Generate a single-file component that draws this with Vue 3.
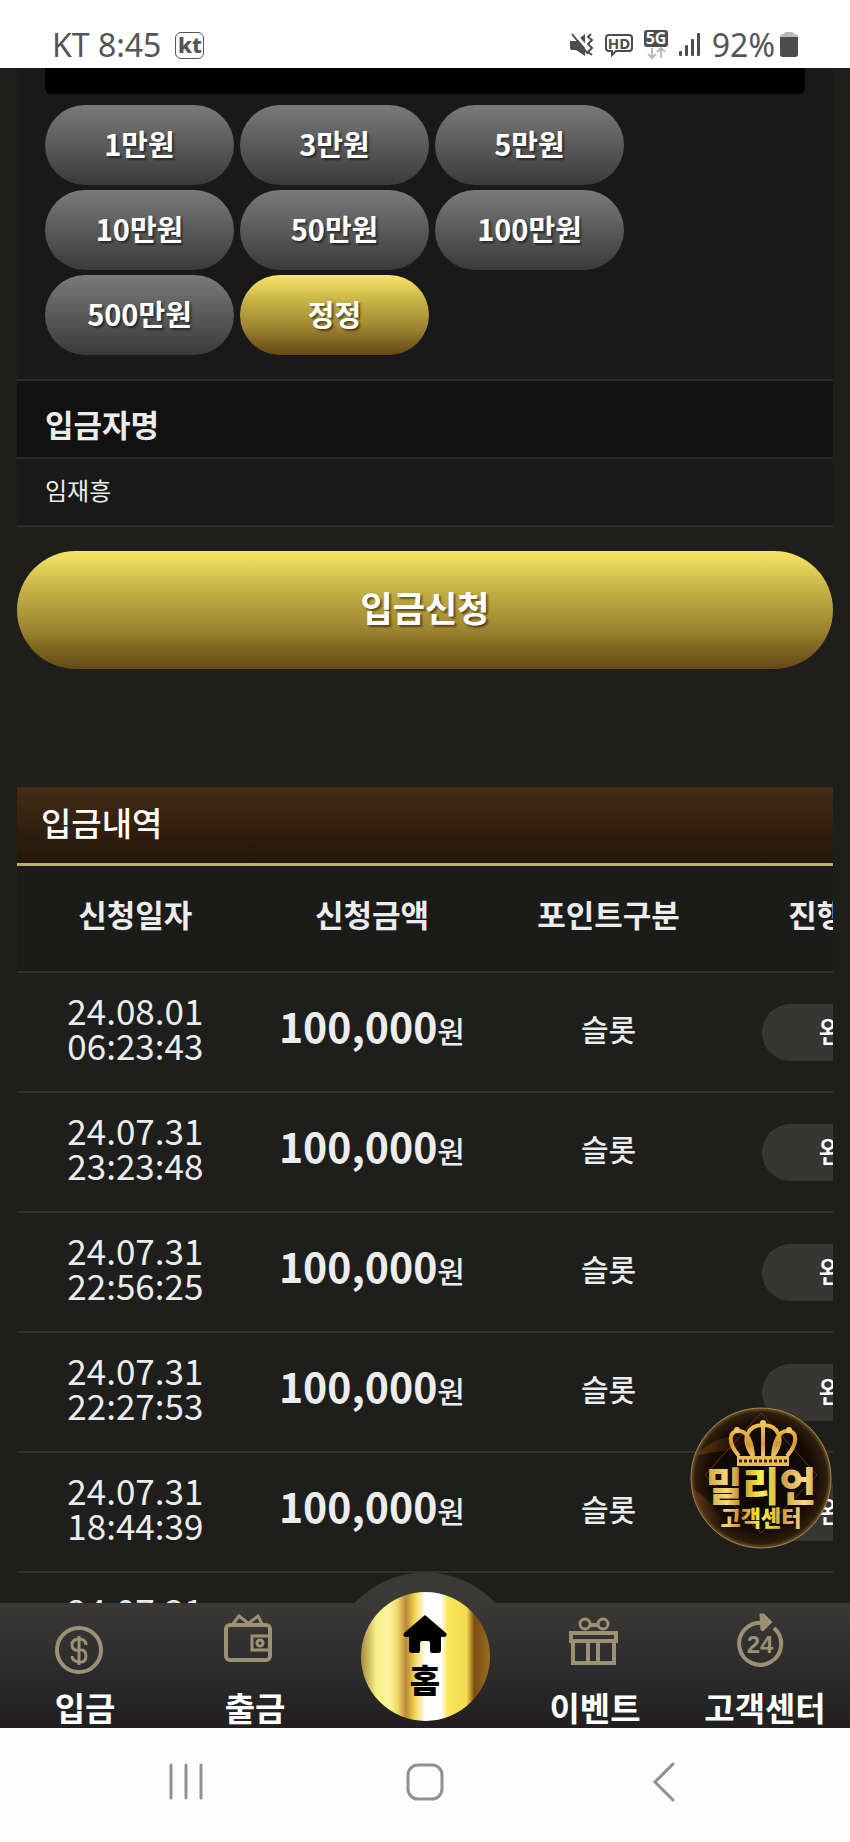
<script setup>
import { ref } from 'vue'

const amounts = ['1만원', '3만원', '5만원', '10만원', '50만원', '100만원', '500만원']
const columns = ['신청일자', '신청금액', '포인트구분', '진행상태']

const depositor = ref('임재흥')

const history = ref([
  { date: '24.08.01', time: '06:23:43', amount: '100,000', type: '슬롯', state: '완료' },
  { date: '24.07.31', time: '23:23:48', amount: '100,000', type: '슬롯', state: '완료' },
  { date: '24.07.31', time: '22:56:25', amount: '100,000', type: '슬롯', state: '완료' },
  { date: '24.07.31', time: '22:27:53', amount: '100,000', type: '슬롯', state: '완료' },
  { date: '24.07.31', time: '18:44:39', amount: '100,000', type: '슬롯', state: '완료' },
  { date: '24.07.31', time: '18:21:07', amount: '100,000', type: '슬롯', state: '완료' }
])
</script>

<template>
  <div class="screen">
    <header class="status">
      <div class="status-left">
        <span>KT 8:45</span>
        <span class="carrier">kt</span>
      </div>
      <div class="status-right">
        <svg width="24" height="24" viewBox="0 0 24 24">
          <path d="M0 8h6l9-7v22l-9-6H2q-2 0-2-2z" fill="#4c4c4c" />
          <path d="M4 0l14 16" stroke="#fff" stroke-width="3" />
          <path d="M2 1l16 20" stroke="#4c4c4c" stroke-width="2" />
          <path d="M21 1l-3 3 4 3-4 4 4 4-4 4 4 3" fill="none" stroke="#4c4c4c" stroke-width="2" />
        </svg>
        <svg width="28" height="24" viewBox="0 0 28 24">
          <path d="M4 2h20q3 0 3 3v10q0 3-3 3H11l-4 4v-4H4q-3 0-3-3V5q0-3 3-3z" fill="none" stroke="#4c4c4c" stroke-width="2" />
          <text x="14" y="16" text-anchor="middle" class="hd">HD</text>
        </svg>
        <svg width="24" height="30" viewBox="0 0 24 30">
          <rect width="24" height="17" rx="3" fill="#4c4c4c" />
          <text x="12" y="14" text-anchor="middle" class="five-g">5G</text>
          <path d="M8 18v10M4 24l4 4 4-4M17 28V19M13 22l4-4 4 4" fill="none" stroke="#bbb" stroke-width="2" />
        </svg>
        <svg width="22" height="24" viewBox="0 0 22 24" fill="#4c4c4c">
          <rect x="0" y="18" width="3" height="5" rx="1" />
          <rect x="6" y="12" width="3" height="11" rx="1" />
          <rect x="12" y="6" width="3" height="17" rx="1" />
          <rect x="18" y="0" width="3" height="23" rx="1" />
        </svg>
        <span class="percent">92%</span>
        <svg width="18" height="26" viewBox="0 0 18 26">
          <rect x="4" y="0" width="10" height="6" rx="2" fill="#bbb" />
          <rect x="0" y="2" width="18" height="23" rx="3" fill="#bbb" />
          <path d="M0 5h18v17q0 3-3 3H3q-3 0-3-3z" fill="#4c4c4c" />
        </svg>
      </div>
    </header>

    <main class="content">
      <section class="form">
        <div class="amount-box">
          <div class="amount-field"></div>
          <div class="amount-buttons">
            <button v-for="amount in amounts" :key="amount" type="button">{{ amount }}</button>
            <button type="button" class="gold">정정</button>
          </div>
        </div>
        <label class="form-label" for="depositor">입금자명</label>
        <div class="form-value">
          <input id="depositor" v-model="depositor" type="text" readonly>
        </div>
      </section>

      <button type="button" class="submit gold">입금신청</button>

      <section class="history">
        <h2>입금내역</h2>
        <table>
          <thead>
            <tr>
              <th v-for="column in columns" :key="column">{{ column }}</th>
            </tr>
          </thead>
          <tbody>
            <tr v-for="row in history" :key="row.time">
              <td class="date">{{ row.date }}<br>{{ row.time }}</td>
              <td><span class="amount">{{ row.amount }}</span>원</td>
              <td>{{ row.type }}</td>
              <td class="state-cell"><span class="state">{{ row.state }}</span></td>
            </tr>
          </tbody>
        </table>
      </section>
    </main>

    <a href="#" class="support">
      <svg viewBox="0 0 142 142">
        <defs>
          <radialGradient id="ball">
            <stop offset="0" stop-color="#080502" />
            <stop offset="0.75" stop-color="#140b04" />
            <stop offset="0.94" stop-color="#2e1e0c" />
            <stop offset="1" stop-color="#6e5426" />
          </radialGradient>
          <linearGradient id="flare" x1="0" y1="0" x2="1" y2="0">
            <stop offset="0" stop-color="#7a4315" stop-opacity="0.6" />
            <stop offset="1" stop-color="#7a4315" stop-opacity="0" />
          </linearGradient>
          <linearGradient id="letters" gradientUnits="userSpaceOnUse" x1="14" y1="0" x2="128" y2="0">
            <stop offset="0" stop-color="#c99a3c" />
            <stop offset="0.2" stop-color="#f6d77a" />
            <stop offset="0.32" stop-color="#c08a2c" />
            <stop offset="0.5" stop-color="#fdf04c" />
            <stop offset="0.7" stop-color="#d0a044" />
            <stop offset="0.88" stop-color="#f8dc86" />
            <stop offset="1" stop-color="#cf9f3e" />
          </linearGradient>
          <linearGradient id="crown" gradientUnits="userSpaceOnUse" x1="0" y1="14" x2="0" y2="60">
            <stop offset="0" stop-color="#f3c65a" />
            <stop offset="0.5" stop-color="#d79a36" />
            <stop offset="1" stop-color="#ffe9a0" />
          </linearGradient>
        </defs>
        <circle cx="71" cy="71" r="70" fill="url(#ball)" stroke="#a58546" stroke-width="1" />
        <path d="M8 46q24-22 54-16l-16 12-40 6z" fill="url(#flare)" />
        <path d="M3 82q14 8 30 30l-12 4Q4 100 3 82z" fill="url(#flare)" />
        <path d="M71 6l56 62-56 58-56-58z" fill="none" stroke="#5a381a" stroke-width="1" />
        <g fill="none" stroke="url(#crown)" stroke-width="4">
          <path d="M49 49C38 36 38 24 49 24c8 0 13 10 14 25" />
          <path d="M97 49c11-13 11-25 0-25-8 0-13 10-14 25" />
          <path d="M63 49C50 32 58 18 73 18s23 14 10 31" />
          <path d="M73 18v31" />
        </g>
        <circle cx="73" cy="16" r="3" fill="#f3c65a" />
        <circle cx="47" cy="23" r="3" fill="#f3c65a" />
        <circle cx="99" cy="23" r="3" fill="#f3c65a" />
        <rect x="47" y="49" width="52" height="10" fill="#e9bd5a" />
        <path d="M49 54h48" stroke="#3a2408" stroke-width="3" stroke-dasharray="3 2" />
        <text x="71" y="94" text-anchor="middle" class="ball-title">밀리언</text>
        <text x="71" y="119" text-anchor="middle" class="ball-sub">고객센터</text>
      </svg>
    </a>

    <footer class="bottom">
      <nav class="menu">
        <a href="#">
          <svg viewBox="0 0 52 60" fill="none" stroke="#9d9175" stroke-width="4">
            <circle cx="20" cy="35" r="22" />
            <path d="M27 30q0-6-7-6t-7 6 7 5 7 6-7 6-7-6M20 21v29" stroke-width="3" />
          </svg>
          <span>입금</span>
        </a>
        <a href="#">
          <svg viewBox="0 0 52 60" fill="none" stroke="#9d9175" stroke-width="3">
            <rect x="-3" y="10" width="44" height="35" rx="4" stroke-width="4" />
            <path d="M4 9l6-8 10 8M20 8l9-7 4 8" />
            <path d="M40 21H23v14h17" />
            <circle cx="31" cy="28" r="3" />
          </svg>
          <span>출금</span>
        </a>
        <a href="#" class="home">
          <svg viewBox="0 0 44 38">
            <path d="M22 0l21 18q2 3-2 4h-3v13q0 3-3 3h-6q-2 0-2-3V28q0-2-2-2h-6q-2 0-2 2v7q0 3-2 3H9q-3 0-3-3V22H3q-4-1-2-4z" fill="#000" />
          </svg>
          <span>홈</span>
        </a>
        <a href="#">
          <svg viewBox="0 0 52 60" fill="none" stroke="#9d9175" stroke-width="4">
            <circle cx="16" cy="9" r="5" stroke-width="3" />
            <circle cx="34" cy="9" r="5" stroke-width="3" />
            <path d="M21 10h8" />
            <path d="M2 18h45v8H2zM4 27v21h41V27M19 27v20M29 27v20" />
          </svg>
          <span>이벤트</span>
        </a>
        <a href="#">
          <svg viewBox="0 0 52 60" fill="none" stroke="#9d9175" stroke-width="4">
            <path d="M35 13A21 21 0 1 1 24 8" />
            <path d="M21-1h4l8 8-9 9-2-1z" fill="#9d9175" stroke-width="1" />
            <text x="21" y="38" text-anchor="middle" class="hours">24</text>
          </svg>
          <span>고객센터</span>
        </a>
      </nav>
      <div class="system">
        <button type="button" aria-label="recents">
          <svg width="36" height="38" viewBox="0 0 36 38">
            <path d="M3 2v33M18 2v33M33 2v33" stroke="#929094" stroke-width="3" stroke-linecap="round" />
          </svg>
        </button>
        <button type="button" aria-label="home">
          <svg width="38" height="38" viewBox="0 0 38 38">
            <rect x="2" y="2" width="34" height="34" rx="10" fill="none" stroke="#929094" stroke-width="3" />
          </svg>
        </button>
        <button type="button" aria-label="back">
          <svg width="24" height="40" viewBox="0 0 24 40">
            <path d="M21 2L3 20l18 18" fill="none" stroke="#929094" stroke-width="3" stroke-linecap="round" />
          </svg>
        </button>
      </div>
    </footer>
  </div>
</template>

<style>
body {
  margin: 0;
  background: #1e1e1d;
}
</style>

<style scoped>
* {
  box-sizing: border-box;
}

.screen {
  height: 100vh;
  display: flex;
  flex-direction: column;
  position: relative;
  overflow: hidden;
  background: #1e1e1d;
  color: #ececec;
  font-family: "Noto Sans CJK KR", sans-serif;
}

button {
  border: none;
  padding: 0;
  font-family: inherit;
  color: #fff;
}

.status {
  flex: none;
  height: 68px;
  padding: 22px 52px 0;
  display: flex;
  justify-content: space-between;
  background: #fff;
  color: #555;
  font-family: "Noto Sans", sans-serif;
  font-size: 32px;
  line-height: 46px;
}

.status-left,
.status-right {
  height: 46px;
  display: flex;
  align-items: center;
}

.status-left {
  gap: 14px;
}

.status-right {
  gap: 11px;
}

.percent {
  margin-right: -6px;
}

.carrier {
  width: 29px;
  height: 27px;
  border: 1px solid #555;
  border-radius: 6px;
  font-size: 22px;
  font-weight: 800;
  line-height: 23px;
  text-align: center;
}

.hd {
  font: bold 15px "Noto Sans", sans-serif;
  fill: #4c4c4c;
}

.five-g {
  font: bold 16px "Noto Sans", sans-serif;
  fill: #fff;
}

.content {
  flex: 1;
  min-height: 0;
  overflow: hidden;
  padding: 0 17px;
}

.form {
  background: #191919;
  border-bottom: 2px solid #2b2b2b;
}

.amount-box {
  padding: 0 28px 24px;
}

.amount-field {
  height: 26px;
  border-radius: 0 0 6px 6px;
  background: #000;
}

.amount-buttons {
  max-width: 579px;
  margin-top: 11px;
  display: grid;
  grid-template-columns: repeat(3, 1fr);
  gap: 5px 6px;
}

.amount-buttons button {
  height: 80px;
  padding-bottom: 4px;
  border-radius: 40px;
  background: linear-gradient(#7a7a7a, #3a3a3a);
  font-size: 29px;
  font-weight: bold;
  text-shadow: 2px 2px 2px rgba(0, 0, 0, 0.5);
}

.amount-buttons .gold,
.gold {
  background: linear-gradient(#f9e667, #c3ae43 35%, #9f8632 65%, #826523 82%, #634a17);
}

.form-label {
  display: block;
  height: 80px;
  padding: 8px 28px 0;
  border-top: 2px solid #2b2b2b;
  border-bottom: 2px solid #2b2b2b;
  background: #111;
  font-size: 31px;
  font-weight: bold;
  line-height: 70px;
}

.form-value {
  height: 66px;
  padding: 0 28px;
}

.form-value input {
  width: 100%;
  height: 60px;
  padding: 0;
  border: none;
  outline: none;
  background: transparent;
  color: #ececec;
  font-family: inherit;
  font-size: 24px;
}

.submit {
  display: block;
  width: 100%;
  height: 118px;
  margin-top: 24px;
  padding-bottom: 8px;
  border-radius: 59px;
  font-size: 35px;
  font-weight: bold;
  text-shadow: 2px 2px 2px rgba(0, 0, 0, 0.5);
}

.history {
  margin-top: 118px;
  overflow: hidden;
}

.history h2 {
  height: 79px;
  margin: 0;
  padding: 0 24px;
  border-bottom: 3px solid #bcae6c;
  background: linear-gradient(#452c16, #221507);
  color: #fff;
  font-size: 33px;
  font-weight: 500;
  line-height: 70px;
}

table {
  width: 116%;
  table-layout: fixed;
  border-collapse: separate;
  border-spacing: 0;
  text-align: center;
}

th,
td {
  padding: 0;
  border-bottom: 2px solid #323230;
  white-space: nowrap;
}

th {
  height: 107px;
  padding-bottom: 10px;
  background: #1b1b1a;
  font-size: 31px;
  font-weight: bold;
}

td {
  height: 120px;
  padding-bottom: 8px;
  font-size: 30px;
  font-weight: 500;
  line-height: 35px;
}

.date {
  padding-bottom: 10px;
  font-size: 35px;
  font-weight: normal;
}

.amount {
  font-size: 41px;
  font-weight: bold;
}

.state-cell {
  padding-bottom: 0;
}

.state {
  display: block;
  width: 166px;
  height: 57px;
  margin: 0 auto;
  border-radius: 29px;
  background: #363635;
  color: #fff;
  font-size: 29px;
  line-height: 52px;
}

.support {
  position: absolute;
  right: 18px;
  bottom: 293px;
  width: 142px;
  height: 142px;
}

.support svg {
  display: block;
  width: 100%;
}

.ball-title {
  font-size: 40px;
  font-weight: 900;
  fill: url(#letters);
}

.ball-sub {
  font-size: 22px;
  font-weight: 900;
  fill: url(#letters);
}

.bottom {
  flex: none;
}

.menu {
  position: relative;
  height: 125px;
  display: grid;
  grid-template-columns: repeat(5, 1fr);
  background: linear-gradient(#3a3938, #211f20);
}

.menu::before {
  content: "";
  position: absolute;
  left: 50%;
  top: -31px;
  width: 180px;
  height: 31px;
  margin-left: -90px;
  background: radial-gradient(circle 97px at 50% 97px, #393938 96px, transparent 97px);
}

.menu a {
  height: 125px;
  padding-top: 12px;
  display: flex;
  flex-direction: column;
  align-items: center;
  color: #fff;
  font-size: 33px;
  font-weight: bold;
  line-height: 36px;
  text-decoration: none;
  white-space: nowrap;
}

.menu svg {
  width: 52px;
  height: 60px;
  margin-bottom: 14px;
  overflow: visible;
}

.menu .home {
  z-index: 1;
  justify-self: center;
  width: 129px;
  height: 129px;
  margin-top: -11px;
  padding-top: 23px;
  border-radius: 50%;
  background: linear-gradient(90deg, #a58a3c, #f8f08a 12%, #fbf39a 22%, #f2dc6c 28%, #b9883a 35%, #f4d850 42%, #fff 50%, #fff 62%, #f9e75a 67%, #f3dc50 82%, #7a4c10 88%, #9a6f20);
  color: #000;
  font-weight: 900;
}

.menu .home svg {
  width: 44px;
  height: 38px;
  margin-bottom: 8px;
}

.hours {
  font: bold 24px "Liberation Sans", sans-serif;
  fill: #9d9175;
  stroke: none;
}

.system {
  height: 114px;
  padding: 0 167px 6px;
  display: flex;
  justify-content: space-between;
  align-items: center;
  background: #fdfdfd;
}

.system button {
  width: 38px;
  display: flex;
  justify-content: center;
  background: none;
}
</style>
